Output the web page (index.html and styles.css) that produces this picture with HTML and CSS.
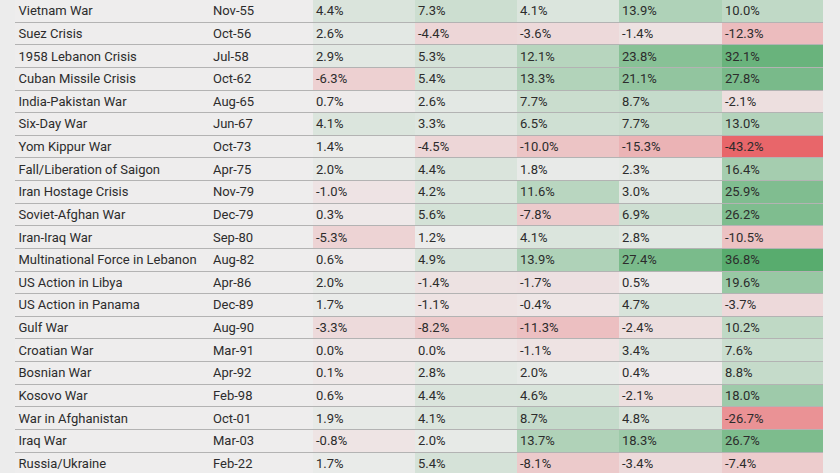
FILE: index.html
```html
<!DOCTYPE html>
<html lang="en">
<head>
<meta charset="utf-8">
<title>Market returns after geopolitical events</title>
<link rel="stylesheet" href="styles.css">
</head>
<body>
<div class="table" id="events">
  <div class="row"><div class="c name">Vietnam War</div><div class="c date">Nov-55</div><div class="c v">4.4%</div><div class="c v">7.3%</div><div class="c v">4.1%</div><div class="c v">13.9%</div><div class="c v">10.0%</div></div>
  <div class="row"><div class="c name">Suez Crisis</div><div class="c date">Oct-56</div><div class="c v">2.6%</div><div class="c v">-4.4%</div><div class="c v">-3.6%</div><div class="c v">-1.4%</div><div class="c v">-12.3%</div></div>
  <div class="row"><div class="c name">1958 Lebanon Crisis</div><div class="c date">Jul-58</div><div class="c v">2.9%</div><div class="c v">5.3%</div><div class="c v">12.1%</div><div class="c v">23.8%</div><div class="c v">32.1%</div></div>
  <div class="row"><div class="c name">Cuban Missile Crisis</div><div class="c date">Oct-62</div><div class="c v">-6.3%</div><div class="c v">5.4%</div><div class="c v">13.3%</div><div class="c v">21.1%</div><div class="c v">27.8%</div></div>
  <div class="row"><div class="c name">India-Pakistan War</div><div class="c date">Aug-65</div><div class="c v">0.7%</div><div class="c v">2.6%</div><div class="c v">7.7%</div><div class="c v">8.7%</div><div class="c v">-2.1%</div></div>
  <div class="row"><div class="c name">Six-Day War</div><div class="c date">Jun-67</div><div class="c v">4.1%</div><div class="c v">3.3%</div><div class="c v">6.5%</div><div class="c v">7.7%</div><div class="c v">13.0%</div></div>
  <div class="row"><div class="c name">Yom Kippur War</div><div class="c date">Oct-73</div><div class="c v">1.4%</div><div class="c v">-4.5%</div><div class="c v">-10.0%</div><div class="c v">-15.3%</div><div class="c v">-43.2%</div></div>
  <div class="row"><div class="c name">Fall/Liberation of Saigon</div><div class="c date">Apr-75</div><div class="c v">2.0%</div><div class="c v">4.4%</div><div class="c v">1.8%</div><div class="c v">2.3%</div><div class="c v">16.4%</div></div>
  <div class="row"><div class="c name">Iran Hostage Crisis</div><div class="c date">Nov-79</div><div class="c v">-1.0%</div><div class="c v">4.2%</div><div class="c v">11.6%</div><div class="c v">3.0%</div><div class="c v">25.9%</div></div>
  <div class="row"><div class="c name">Soviet-Afghan War</div><div class="c date">Dec-79</div><div class="c v">0.3%</div><div class="c v">5.6%</div><div class="c v">-7.8%</div><div class="c v">6.9%</div><div class="c v">26.2%</div></div>
  <div class="row"><div class="c name">Iran-Iraq War</div><div class="c date">Sep-80</div><div class="c v">-5.3%</div><div class="c v">1.2%</div><div class="c v">4.1%</div><div class="c v">2.8%</div><div class="c v">-10.5%</div></div>
  <div class="row"><div class="c name">Multinational Force in Lebanon</div><div class="c date">Aug-82</div><div class="c v">0.6%</div><div class="c v">4.9%</div><div class="c v">13.9%</div><div class="c v">27.4%</div><div class="c v">36.8%</div></div>
  <div class="row"><div class="c name">US Action in Libya</div><div class="c date">Apr-86</div><div class="c v">2.0%</div><div class="c v">-1.4%</div><div class="c v">-1.7%</div><div class="c v">0.5%</div><div class="c v">19.6%</div></div>
  <div class="row"><div class="c name">US Action in Panama</div><div class="c date">Dec-89</div><div class="c v">1.7%</div><div class="c v">-1.1%</div><div class="c v">-0.4%</div><div class="c v">4.7%</div><div class="c v">-3.7%</div></div>
  <div class="row"><div class="c name">Gulf War</div><div class="c date">Aug-90</div><div class="c v">-3.3%</div><div class="c v">-8.2%</div><div class="c v">-11.3%</div><div class="c v">-2.4%</div><div class="c v">10.2%</div></div>
  <div class="row"><div class="c name">Croatian War</div><div class="c date">Mar-91</div><div class="c v">0.0%</div><div class="c v">0.0%</div><div class="c v">-1.1%</div><div class="c v">3.4%</div><div class="c v">7.6%</div></div>
  <div class="row"><div class="c name">Bosnian War</div><div class="c date">Apr-92</div><div class="c v">0.1%</div><div class="c v">2.8%</div><div class="c v">2.0%</div><div class="c v">0.4%</div><div class="c v">8.8%</div></div>
  <div class="row"><div class="c name">Kosovo War</div><div class="c date">Feb-98</div><div class="c v">0.6%</div><div class="c v">4.4%</div><div class="c v">4.6%</div><div class="c v">-2.1%</div><div class="c v">18.0%</div></div>
  <div class="row"><div class="c name">War in Afghanistan</div><div class="c date">Oct-01</div><div class="c v">1.9%</div><div class="c v">4.1%</div><div class="c v">8.7%</div><div class="c v">4.8%</div><div class="c v">-26.7%</div></div>
  <div class="row"><div class="c name">Iraq War</div><div class="c date">Mar-03</div><div class="c v">-0.8%</div><div class="c v">2.0%</div><div class="c v">13.7%</div><div class="c v">18.3%</div><div class="c v">26.7%</div></div>
  <div class="row"><div class="c name">Russia/Ukraine</div><div class="c date">Feb-22</div><div class="c v">1.7%</div><div class="c v">5.4%</div><div class="c v">-8.1%</div><div class="c v">-3.4%</div><div class="c v">-7.4%</div></div>
</div>
<script src="script.js"></script>
</body>
</html>
```

FILE: styles.css
```css
html, body {
  margin: 0;
  padding: 0;
  background: #ececec;
}
body {
  font-family: Roboto, "Liberation Sans", Arial, sans-serif;
  font-size: 13px;
  color: #2c2c2c;
  overflow: hidden;
  height: 473px;
}
.table {
  margin-left: 15px;
  width: 808px;
  display: flex;
  flex-direction: column;
}
.row {
  display: grid;
  grid-template-columns: 195px 103px 102px 102px 102px 103px 101px;
  height: 22.63px;
  box-sizing: border-box;
  border-bottom: 1.5px solid #b3b3b3;
  background: #eeeded;
}
.c {
  display: flex;
  align-items: center;
  padding-left: 3px;
  white-space: nowrap;
  overflow: hidden;
}
.name { padding-left: 3.5px; }
```

FILE: script.js
```js
(function () {
  var base = [238, 237, 237];
  var green = [88, 172, 110];
  var red = [232, 102, 106];
  var min = -43.2, max = 36.8, mid = 1.0;
  function mix(a, b, t) {
    return 'rgb(' + a.map(function (x, i) { return Math.round(x + (b[i] - x) * t); }).join(',') + ')';
  }
  var cells = document.querySelectorAll('.c.v');
  for (var i = 0; i < cells.length; i++) {
    var v = parseFloat(cells[i].textContent);
    var col;
    if (v >= mid) {
      col = mix(base, green, Math.pow((v - mid) / (max - mid), 0.85));
    } else {
      col = mix(base, red, Math.pow((mid - v) / (mid - min), 0.85));
    }
    cells[i].style.backgroundColor = col;
  }
})();
```
